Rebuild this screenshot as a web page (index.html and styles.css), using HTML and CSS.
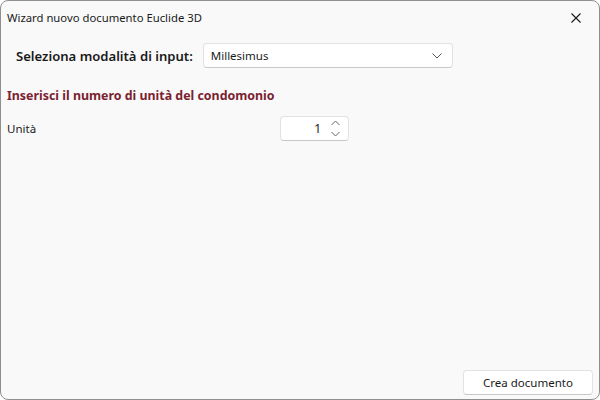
FILE: index.html
```html
<!DOCTYPE html>
<html lang="it">
<head>
    <meta charset="UTF-8">
    <title>Wizard nuovo documento Euclide 3D</title>
    <link rel="stylesheet" href="styles.css">
</head>
<body>
    <div class="window">
        <header class="titlebar">
            <span class="title">Wizard nuovo documento Euclide 3D</span>
            <button class="close" aria-label="Chiudi">
                <svg width="10" height="10" viewBox="0 0 10 10"><path d="M0.5 0.5 L9.5 9.5 M9.5 0.5 L0.5 9.5" stroke="#1a1a1a" stroke-width="1.1" fill="none"/></svg>
            </button>
        </header>
        <main class="content">
            <div class="mode">
                <label class="mode-label">Seleziona modalità di input:</label>
                <div class="combo">
                    <span>Millesimus</span>
                    <svg width="10" height="6" viewBox="0 0 10 6"><path d="M0.5 0.5 L5 5 L9.5 0.5" stroke="#555" stroke-width="1" fill="none"/></svg>
                </div>
            </div>
            <h3 class="section">Inserisci il numero di unità del condomonio</h3>
            <div class="row">
                <span class="row-label">Unità</span>
                <div class="spin">
                    <span class="value">1</span>
                    <div class="arrows">
                        <svg width="9" height="6" viewBox="0 0 9 6"><path d="M0.5 5 L4.5 1 L8.5 5" stroke="#666" stroke-width="1" fill="none"/></svg>
                        <svg width="9" height="6" viewBox="0 0 9 6"><path d="M0.5 1 L4.5 5 L8.5 1" stroke="#666" stroke-width="1" fill="none"/></svg>
                    </div>
                </div>
            </div>
        </main>
        <footer class="footer">
            <button class="create">Crea documento</button>
        </footer>
    </div>
</body>
</html>
```

FILE: styles.css
```css
*{
    margin: 0;
    padding: 0;
    box-sizing: border-box;
    font-family: "Noto Sans", "Open Sans", sans-serif;
}

body{
    background-color: #ffffff;
}

.window{
    width: 600px;
    height: 400px;
    background-color: #f9f9f9;
    border: 1px solid #8f8f8f;
    border-radius: 8px;
    display: flex;
    flex-direction: column;
    overflow: hidden;
}

.titlebar{
    height: 33px;
    display: flex;
    align-items: center;
    justify-content: space-between;
    padding-left: 6px;
}
.title{
    font-size: 11.3px;
    color: #1a1a1a;
}
.close{
    width: 46px;
    height: 32px;
    border: 0;
    background: none;
    display: flex;
    align-items: center;
    justify-content: center;
}

.content{
    flex: 1;
    padding: 0 6px;
}

.mode{
    display: flex;
    align-items: center;
    padding: 9px 0 0 9px;
}
.mode-label{
    font-size: 13.1px;
    font-weight: 600;
    color: #1a1a1a;
    margin-right: 10px;
}
.combo{
    width: 250px;
    height: 25px;
    background-color: #ffffff;
    border: 1px solid #e2e2e2;
    border-bottom-color: #c8c8c8;
    border-radius: 4px;
    display: flex;
    align-items: center;
    justify-content: space-between;
    padding: 0 10px 0 7px;
    font-size: 11.5px;
    color: #1a1a1a;
}

.section{
    font-size: 12.4px;
    font-weight: 700;
    color: #7a2230;
    margin-top: 19px;
}

.row{
    display: flex;
    align-items: center;
    margin-top: 12px;
}
.row-label{
    width: 273px;
    font-size: 11.5px;
    color: #1a1a1a;
}
.spin{
    width: 69px;
    height: 25px;
    background-color: #ffffff;
    border: 1px solid #e2e2e2;
    border-bottom-color: #c8c8c8;
    border-radius: 4px;
    display: flex;
    align-items: center;
    justify-content: flex-end;
    padding-right: 8px;
}
.value{
    font-size: 12px;
    color: #1a1a1a;
    margin-right: 10px;
}
.arrows{
    display: flex;
    flex-direction: column;
    gap: 5px;
}
.arrows svg{
    display: block;
}

.footer{
    display: flex;
    justify-content: flex-end;
    padding: 0 6px 4px 0;
}
.create{
    width: 130px;
    height: 25px;
    background-color: #ffffff;
    border: 1px solid #e2e2e2;
    border-bottom-color: #c8c8c8;
    border-radius: 4px;
    font-size: 11.5px;
    color: #1a1a1a;
}
```
